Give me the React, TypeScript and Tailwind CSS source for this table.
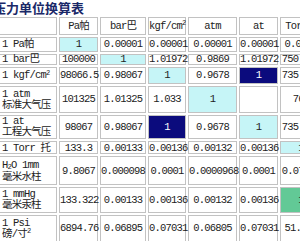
type Cell = string | { t: string; bg: 'cyan' | 'navy' | 'green' };

interface Row {
  label: React.ReactNode;
  h: number;
  cells: Cell[];
}

const bgClass = {
  cyan: 'bg-[#c6f5f7]',
  navy: 'bg-[#0b0b7d] text-white',
  green: 'bg-[#62c996]',
};

const heights: Record<number, string> = {
  11: 'h-[11px] leading-[9px]',
  13: 'h-[13px] leading-[10px]',
  15: 'h-[15px] leading-[11px]',
  17: 'h-[17px] leading-[11px]',
  18: 'h-[18px] leading-[11px]',
  24: 'h-[24px] leading-[11px]',
  26: 'h-[26px] leading-[11px]',
  27: 'h-[27px] leading-[11px]',
  29: 'h-[29px] leading-[12px]',
};

const rows: Row[] = [
  { label: '1 Pa帕', h: 15, cells: [{ t: '1', bg: 'cyan' }, '0.00001', '0.00001', '0.00001', '0.00001', '0.0075'] },
  { label: '1 bar巴', h: 11, cells: ['100000', { t: '1', bg: 'cyan' }, '1.01972', '0.9869', '1.01972', '750.062'] },
  {
    label: (
      <>
        1 kgf/cm<sup className="text-[7px]">2</sup>
      </>
    ),
    h: 17,
    cells: ['98066.5', '0.98067', { t: '1', bg: 'cyan' }, '0.9678', { t: '1', bg: 'navy' }, '735.559'],
  },
  {
    label: (
      <>
        1 atm
        <br />
        标准大气压
      </>
    ),
    h: 27,
    cells: ['101325', '1.01325', '1.033', { t: '1', bg: 'cyan' }, '', '760'],
  },
  {
    label: (
      <>
        1 at
        <br />
        工程大气压
      </>
    ),
    h: 24,
    cells: ['98067', '0.98067', { t: '1', bg: 'navy' }, '0.9678', { t: '1', bg: 'cyan' }, '735.559'],
  },
  { label: '1 Torr 托', h: 13, cells: ['133.3', '0.00133', '0.00136', '0.00132', '0.00136', { t: '1', bg: 'cyan' }] },
  {
    label: (
      <>
        H<sub className="text-[7px]">2</sub>O 1mm
        <br />
        毫米水柱
      </>
    ),
    h: 29,
    cells: ['9.8067', '0.000098', '0.0001', '0.0000968', '0.0001', '0.07356'],
  },
  {
    label: (
      <>
        1 mmHg
        <br />
        毫米汞柱
      </>
    ),
    h: 26,
    cells: ['133.322', '0.00133', '0.00136', '0.00132', '0.00136', { t: '1', bg: 'green' }],
  },
  {
    label: (
      <>
        1 Psi
        <br />
        磅/寸<sup className="text-[7px]">2</sup>
      </>
    ),
    h: 27,
    cells: ['6894.76', '0.06895', '0.07031', '0.06805', '0.07031', '51.715'],
  },
];

const cellBase = 'border border-[#c2c2c2] p-0 text-center align-middle whitespace-nowrap';

export default function App() {
  return (
    <div
      className="w-[300px] h-[241px] overflow-hidden bg-white text-[#222222] text-[10.5px] tracking-[-0.8px]"
      style={{ fontFamily: '"Liberation Mono", "Noto Sans CJK SC", monospace' }}
    >
      {/* Title - first glyph is clipped by the viewport */}
      <h1
        className="ml-[-7px] h-[15px] text-[13px] leading-[15px] font-bold tracking-normal text-[#1a2868] whitespace-nowrap"
        style={{ fontFamily: '"Noto Sans CJK SC", sans-serif' }}
      >
        压力单位换算表
      </h1>

      <table className="ml-[-6px] w-[330px] table-fixed border-separate border-spacing-[2px]">
        <thead>
          <tr className={heights[18]}>
            <th className={`${cellBase} w-[61px] font-normal`}></th>
            <th className={`${cellBase} w-[39px] font-normal`}>Pa帕</th>
            <th className={`${cellBase} w-[46px] font-normal`}>bar巴</th>
            <th className={`${cellBase} w-[38px] font-normal`}>
              kgf/cm<sup className="text-[7px]">2</sup>
            </th>
            <th className={`${cellBase} w-[49px] font-normal`}>atm</th>
            <th className={`${cellBase} w-[39px] font-normal`}>at</th>
            <th className={`${cellBase} w-[42px] font-normal`}>Torr托</th>
          </tr>
        </thead>
        <tbody>
          {rows.map((row, i) => (
            <tr key={i} className={heights[row.h]}>
              <td className={`${cellBase} !text-left pl-[5px]`}>{row.label}</td>
              {row.cells.map((c, j) =>
                typeof c === 'string' ? (
                  <td key={j} className={cellBase}>
                    {c}
                  </td>
                ) : (
                  <td key={j} className={`${cellBase} ${bgClass[c.bg]}`}>
                    {c.t}
                  </td>
                )
              )}
            </tr>
          ))}
        </tbody>
      </table>
    </div>
  );
}
